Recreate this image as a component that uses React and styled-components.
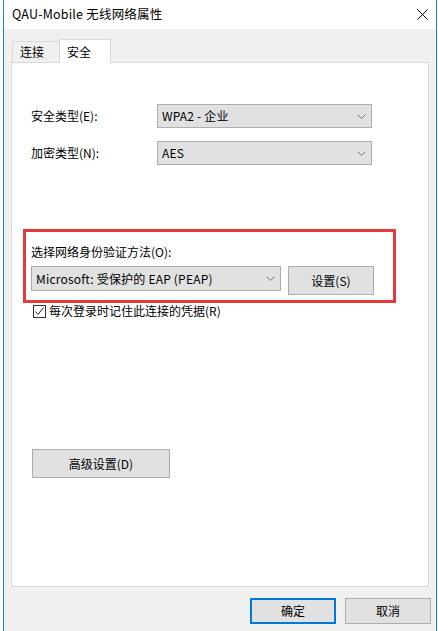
import styled, { createGlobalStyle } from "styled-components";

const GlobalStyle = createGlobalStyle`
  html, body {
    margin: 0;
    padding: 0;
    background: #ffffff;
  }
  body {
    font-family: "Noto Sans CJK SC", "Noto Sans", sans-serif;
    font-size: 12px;
    color: #000;
  }
`;

const Ventana = styled.div`
  margin-left: 3px;
  width: 434px;
  height: 631px;
  box-sizing: border-box;
  border-left: 1px solid #1883d7;
  border-right: 1px solid #1883d7;
  background: #f0f0f0;
  display: flex;
  flex-direction: column;
  overflow: hidden;
`;

const BarraTitulo = styled.div`
  height: 29px;
  flex-shrink: 0;
  background: #ffffff;
  display: flex;
  align-items: center;
  justify-content: space-between;
  padding: 0 8px 1px 8px;
  box-sizing: border-box;
  font-size: 12.5px;
  line-height: 16px;
  letter-spacing: 0.2px;
`;

const BotonCerrar = styled.div`
  width: 11px;
  height: 11px;
  display: flex;
  svg {
    width: 100%;
    height: 100%;
  }
`;

const Cuerpo = styled.div`
  padding: 10px 7px 0 7px;
  display: flex;
  flex-direction: column;
`;

const Pestanas = styled.div`
  display: flex;
  align-items: flex-end;
  height: 23px;
  padding-left: 1px;
`;

const Pestana = styled.div`
  box-sizing: border-box;
  width: ${(p) => (p.activa ? "52px" : "47px")};
  height: ${(p) => (p.activa ? "24px" : "21px")};
  margin-bottom: ${(p) => (p.activa ? "-1px" : "0")};
  background: ${(p) => (p.activa ? "#ffffff" : "#f0f0f0")};
  border: 1px solid #d9d9d9;
  border-bottom: none;
  border-right: ${(p) => (p.activa ? "1px solid #d9d9d9" : "none")};
  padding-left: 7px;
  display: flex;
  align-items: center;
  line-height: 16px;
  position: relative;
  z-index: 1;
`;

const Panel = styled.div`
  box-sizing: border-box;
  height: 525px;
  background: #ffffff;
  border: 1px solid #d9d9d9;
  padding: 41px 0 0 19px;
  display: flex;
  flex-direction: column;
  align-items: flex-start;
`;

const Formulario = styled.div`
  display: grid;
  grid-template-columns: 126px 215px;
  row-gap: 13px;
  align-items: center;
`;

const Etiqueta = styled.span`
  line-height: 16px;
`;

const Desplegable = styled.div`
  box-sizing: border-box;
  width: ${(p) => p.ancho || "215px"};
  height: ${(p) => p.alto || "24px"};
  background: #e1e1e1;
  border: 1px solid #adadad;
  display: flex;
  align-items: center;
  justify-content: space-between;
  padding: 0 5px 0 4px;
  line-height: 16px;
  letter-spacing: 0.2px;
  svg {
    width: 9px;
    height: 5px;
    flex-shrink: 0;
  }
`;

const Resaltado = styled.div`
  box-sizing: border-box;
  width: 373px;
  margin-top: 64px;
  margin-left: -8px;
  border: 3px solid #e43a3f;
  padding: 12px 0 5px 5px;
  display: flex;
  flex-direction: column;
`;

const FilaMetodo = styled.div`
  display: flex;
  align-items: flex-start;
  gap: 7px;
  margin-top: 6px;
`;

const Boton = styled.div`
  box-sizing: border-box;
  width: ${(p) => p.ancho || "86px"};
  height: ${(p) => p.alto || "29px"};
  background: #e1e1e1;
  border: ${(p) => (p.predeterminado ? "2px solid #0078d7" : "1px solid #adadad")};
  display: flex;
  align-items: center;
  justify-content: center;
  line-height: 16px;
  margin-left: ${(p) => p.margenIzq || "0"};
  margin-top: ${(p) => p.margenSup || "0"};
`;

const FilaCasilla = styled.label`
  display: flex;
  align-items: center;
  gap: 3px;
  margin-left: 2px;
  height: 16px;
  line-height: 16px;
`;

const Casilla = styled.span`
  box-sizing: border-box;
  width: 13px;
  height: 13px;
  border: 1px solid #333333;
  background: #ffffff;
  display: flex;
  svg {
    width: 100%;
    height: 100%;
  }
`;

const Pie = styled.div`
  display: flex;
  justify-content: flex-end;
  gap: 9px;
  margin-top: 11px;
  margin-right: -2px;
`;

const Flecha = () => (
  <svg viewBox="0 0 9 5">
    <polyline points="0.5,0.5 4.5,4.5 8.5,0.5" fill="none" stroke="#707070" strokeWidth="1" />
  </svg>
);

export default function App() {
  return (
    <>
      <GlobalStyle />
      <Ventana>
        <BarraTitulo>
          <span>QAU-Mobile 无线网络属性</span>
          <BotonCerrar>
            <svg viewBox="0 0 11 11">
              <path d="M0.5 0.5L10.5 10.5M10.5 0.5L0.5 10.5" stroke="#000" strokeWidth="1" fill="none" />
            </svg>
          </BotonCerrar>
        </BarraTitulo>
        <Cuerpo>
          <Pestanas>
            <Pestana>连接</Pestana>
            <Pestana activa>安全</Pestana>
          </Pestanas>
          <Panel>
            <Formulario>
              <Etiqueta>安全类型(E):</Etiqueta>
              <Desplegable>
                <span>WPA2 - 企业</span>
                <Flecha />
              </Desplegable>
              <Etiqueta>加密类型(N):</Etiqueta>
              <Desplegable>
                <span>AES</span>
                <Flecha />
              </Desplegable>
            </Formulario>

            <Resaltado>
              <Etiqueta>选择网络身份验证方法(O):</Etiqueta>
              <FilaMetodo>
                <Desplegable ancho="250px" alto="25px">
                  <span>Microsoft: 受保护的 EAP (PEAP)</span>
                  <Flecha />
                </Desplegable>
                <Boton>设置(S)</Boton>
              </FilaMetodo>
            </Resaltado>

            <FilaCasilla>
              <Casilla>
                <svg viewBox="0 0 11 11">
                  <polyline points="1.5,5.5 4,8.5 9.5,1.5" fill="none" stroke="#222" strokeWidth="1" />
                </svg>
              </Casilla>
              <span>每次登录时记住此连接的凭据(R)</span>
            </FilaCasilla>

            <Boton ancho="138px" margenIzq="1px" margenSup="130px">
              高级设置(D)
            </Boton>
          </Panel>
          <Pie>
            <Boton predeterminado alto="26px">确定</Boton>
            <Boton alto="26px">取消</Boton>
          </Pie>
        </Cuerpo>
      </Ventana>
    </>
  );
}
